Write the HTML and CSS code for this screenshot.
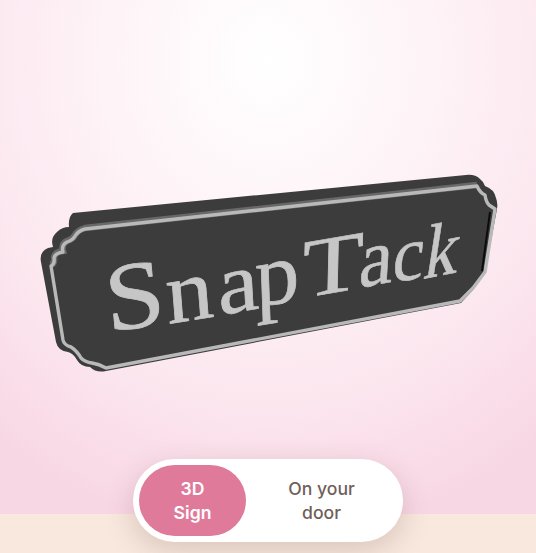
FILE: index.html
```html
<!DOCTYPE html>
<html lang="en">
<head>
<meta charset="utf-8">
<title>SnapTack</title>
<link rel="stylesheet" href="styles.css">
</head>
<body>
<main class="page">
  <section class="viewer">
    <svg class="sign" viewBox="0 0 536 553" width="536" height="553" aria-label="SnapTack sign">
      <g class="soft">
        <path class="body" d="M73 213 L466 175 Q475 174 480 179 Q484 182 485 186 Q494 189 496 198 Q498 203 497 209 L485 273 L473 290 L461 303 L106 371 Q96 373 90 367 Q81 367 77 360 Q73 353 68 352 Q58 351 56 342 L41 262 Q39 252 48 248 L53 247 Q50 238 57 232 Q62 227 69 227 Q68 217 73 213 Z"/>
        <path class="edge-glow" d="M51 266 Q55 264 54 258 Q55 253 63 252 Q61 245 67 242 Q73 240 75 236 Q78 231 85 229 L477 186"/>
        <path class="edge" d="M51 266 Q55 264 54 258 Q55 253 63 252 Q61 245 67 242 Q73 240 75 236 Q78 231 85 229 L477 186 Q480 193 485 195 Q486 202 489 205 Q492 207 495 209 L485 272 L473 288 L460 301 L106 368 Q99 364 92 363 Q85 362 81 358 Q77 351 71 347 Q64 345 63 340 Z"/>
        <path class="dark-line" d="M490 212 L482 271"/>
      </g>
      <g class="letters">
        <text transform="matrix(1.06 -.16 .09 .96 108 332)">S</text>
        <text transform="matrix(.94 -.15 .07 .88 168 324)">n</text>
        <text transform="matrix(.92 -.15 .05 .86 219 315)">a</text>
        <text transform="matrix(.88 -.14 .03 .88 256 307)">p</text>
        <text transform="matrix(1 -.17 -.02 .84 302 298)">T</text>
        <text transform="matrix(.76 -.14 -.05 .82 358 288)">a</text>
        <text transform="matrix(.7 -.13 -.08 .78 391 283)">c</text>
        <text transform="matrix(.68 -.13 -.12 .78 422 279)">k</text>
      </g>
    </svg>
  </section>
  <footer class="strip"></footer>
  <nav class="toggle">
    <button class="option active">3D<br>Sign</button>
    <button class="option">On your<br>door</button>
  </nav>
</main>
</body>
</html>
```

FILE: styles.css
```css
* { box-sizing: border-box; }
html, body { margin: 0; height: 100%; }
.page {
  position: relative;
  width: 536px;
  height: 553px;
  display: flex;
  flex-direction: column;
  overflow: hidden;
  font-family: Inter, "Noto Sans", sans-serif;
}
.viewer {
  position: relative;
  flex: 1;
  background: radial-gradient(ellipse 440px 480px at 268px 60px, #ffffff 0%, #fef4f8 35%, #fce7ef 70%, #f8d7e5 100%);
  background-color: #f8d7e5;
}
.sign { position: absolute; left: 0; top: 0; }
.soft { filter: blur(.45px); }
.body { fill: #3c3c3c; }
.edge { fill: none; stroke: #b9b9b9; stroke-width: 3.4; stroke-linejoin: round; }
.edge-glow { fill: none; stroke: rgba(185, 185, 185, .35); stroke-width: 6.5; transform: translateY(-1px); }
.dark-line { fill: none; stroke: #0c0c0c; stroke-width: 2; }
.letters text {
  font-family: "Liberation Serif", serif;
  font-size: 100px;
  fill: #c6c6c6;
  stroke: #c6c6c6;
  stroke-width: .8px;
}
.strip { height: 39px; background: #f8e8de; }
.toggle {
  position: absolute;
  left: 133px;
  top: 459px;
  width: 270px;
  height: 83px;
  padding: 6px;
  display: flex;
  border-radius: 42px;
  background: #ffffff;
  box-shadow: 0 8px 28px rgba(110, 70, 60, .22);
}
.option {
  width: 107px;
  padding: 0;
  border: 0;
  border-radius: 36px;
  background: transparent;
  font: 600 17.6px/24px Inter, "Noto Sans", sans-serif;
  color: #6f5f5a;
  text-align: center;
}
.option + .option { flex: 1; width: auto; font-weight: 500; }
.option.active { background: #df7a9a; color: #ffffff; }
```
